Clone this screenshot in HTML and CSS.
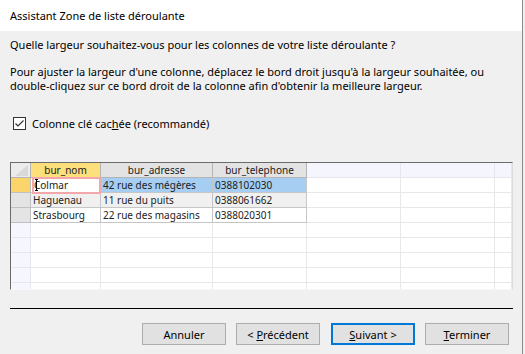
FILE: index.html
```html
<!DOCTYPE html>
<html lang="fr">
<head>
    <meta charset="UTF-8">
    <title>Assistant Zone de liste déroulante</title>
    <link rel="stylesheet" href="styles.css">
</head>
<body>
<div class="window">
    <div class="titlebar">Assistant Zone de liste déroulante</div>

    <div class="content">
        <p class="question">Quelle largeur souhaitez-vous pour les colonnes de votre liste déroulante ?</p>
        <p class="para">Pour ajuster la largeur d'une colonne, déplacez le bord droit jusqu'à la largeur souhaitée, ou<br>double-cliquez sur ce bord droit de la colonne afin d'obtenir la meilleure largeur.</p>

        <label class="check">
            <span class="box">
                <svg width="13" height="13" viewBox="0 0 13 13">
                    <rect x="0.5" y="0.5" width="12" height="12" fill="#fff" stroke="#333"/>
                    <polyline points="2.5,6.5 5,9 10.5,3.5" fill="none" stroke="#333" stroke-width="1.2"/>
                </svg>
            </span>
            <span>Colonne clé cac<u>h</u>ée (recommandé)</span>
        </label>

        <div class="grid">
            <div class="sheet">
                <div class="c corner">
                    <svg width="19" height="14" viewBox="0 0 19 14"><polygon points="4,13 17,2 17,13" fill="#d9d9d9"/></svg>
                </div>
                <div class="c hy">bur_nom</div>
                <div class="c hd">bur_adresse</div>
                <div class="c hd">bur_telephone</div>
                <div class="c he"></div>
                <div class="c he"></div>
                <div class="c he"></div>

                <div class="c ry"></div>
                <div class="c d cur"><span class="caret"></span>Colmar</div>
                <div class="c d sel">42 rue des mégères</div>
                <div class="c d sel">0388102030</div>
                <div class="c e"></div>
                <div class="c e"></div>
                <div class="c e"></div>

                <div class="c rh"></div>
                <div class="c d alt">Haguenau</div>
                <div class="c d alt">11 rue du puits</div>
                <div class="c d alt">0388061662</div>
                <div class="c e"></div>
                <div class="c e"></div>
                <div class="c e"></div>

                <div class="c rh"></div>
                <div class="c d">Strasbourg</div>
                <div class="c d">22 rue des magasins</div>
                <div class="c d">0388020301</div>
                <div class="c e"></div>
                <div class="c e"></div>
                <div class="c e"></div>

                <div class="c re"></div><div class="c e"></div><div class="c e"></div><div class="c e"></div><div class="c e"></div><div class="c e"></div><div class="c e"></div>
                <div class="c re"></div><div class="c e"></div><div class="c e"></div><div class="c e"></div><div class="c e"></div><div class="c e"></div><div class="c e"></div>
                <div class="c re"></div><div class="c e"></div><div class="c e"></div><div class="c e"></div><div class="c e"></div><div class="c e"></div><div class="c e"></div>
                <div class="c re"></div><div class="c e"></div><div class="c e"></div><div class="c e"></div><div class="c e"></div><div class="c e"></div><div class="c e"></div>
                <div class="c re"></div><div class="c e"></div><div class="c e"></div><div class="c e"></div><div class="c e"></div><div class="c e"></div><div class="c e"></div>
            </div>
        </div>

        <div class="separator"></div>

        <div class="buttons">
            <button class="btn">Annuler</button>
            <button class="btn prev">&lt; <u>P</u>récédent</button>
            <button class="btn focus"><u>S</u>uivant &gt;</button>
            <button class="btn"><u>T</u>erminer</button>
        </div>
    </div>
</div>
</body>
</html>
```

FILE: styles.css
```css
* {
    box-sizing: border-box;
}

body {
    margin: 0;
    background: #f0f0f0;
    font-family: "Noto Sans", sans-serif;
    font-size: 11px;
    color: #000;
}

.window {
    width: 523px;
    height: 354px;
    background: #f0f0f0;
    border-right: 1px solid #8a8a8a;
    overflow: hidden;
}

.titlebar {
    height: 31px;
    line-height: 31px;
    padding-left: 10px;
    background: #fff;
}

.content {
    padding: 0 10px;
}

.question {
    margin: 7px 0 0 0;
    line-height: 13px;
}

.para {
    margin: 14px 0 0 0;
    line-height: 14px;
}

.check {
    display: flex;
    align-items: center;
    gap: 6px;
    height: 13px;
    margin-top: 24px;
    padding-left: 3px;
    line-height: 13px;
}
.check .box {
    display: block;
    width: 13px;
    height: 13px;
}
.check svg {
    display: block;
}

/* datasheet */
.grid {
    margin-top: 32px;
    width: 503px;
    height: 128px;
    border: 1px solid;
    border-color: #6b6b6b #dcdcdc #f8f8f8 #6b6b6b;
    background: #fff;
    overflow: hidden;
}
.sheet {
    display: grid;
    grid-template-columns: 20px 70px 112px 94px 94px 94px 17px;
    grid-auto-rows: 15px;
    font-size: 10px;
    color: #222;
}
.c {
    border-right: 1px solid #c6c6c6;
    border-bottom: 1px solid #c6c6c6;
    line-height: 14px;
    white-space: nowrap;
    overflow: hidden;
}
.corner {
    background: #ececec;
    border-color: #b4b4b4;
}
.corner svg {
    display: block;
}
.hd,
.hy {
    text-align: center;
    background: #e3e3e3;
    border-color: #b4b4b4;
}
.hy {
    background: #fddf7c;
}
.he {
    background: #f4f5fd;
    border-color: #e6e6ee;
}
.rh {
    background: #e4e4e4;
    border-color: #c0c0c0;
}
.ry {
    background: #fbd56b;
    border-color: #c0c0c0;
}
.re {
    background: #f5f6fe;
    border-color: #e6e6ee;
}
.d {
    padding-left: 2px;
}
.e {
    border-color: #e8e8e8;
}
.alt {
    background: #f0f0f0;
}
.sel {
    background: #a6cef3;
}
.cur {
    position: relative;
    overflow: visible;
    padding-left: 3px;
}
.cur::after {
    content: '';
    position: absolute;
    left: 1px;
    top: -1px;
    right: -1px;
    bottom: -2px;
    border: 2px solid #f4a7ab;
}
.caret {
    position: absolute;
    left: 4px;
    top: 1px;
    width: 3px;
    height: 12px;
    border-top: 1px solid #000;
    border-bottom: 1px solid #000;
}
.caret::before {
    content: '';
    position: absolute;
    left: 1px;
    top: 0;
    bottom: 0;
    border-left: 1px solid #000;
}

.separator {
    margin-top: 18px;
    width: 503px;
    height: 1px;
    background: #000;
}

.buttons {
    display: flex;
    justify-content: flex-end;
    gap: 10px;
    margin-top: 14px;
    padding-right: 3px;
}
.btn {
    width: 84px;
    height: 22px;
    padding: 0;
    font-family: "Noto Sans", sans-serif;
    font-size: 11px;
    color: #000;
    background: #e1e1e1;
    border: 1px solid #adadad;
    border-radius: 0;
}
.btn.prev {
    margin-right: 1px;
}
.btn.focus {
    border: 2px solid #0078d7;
}
```
